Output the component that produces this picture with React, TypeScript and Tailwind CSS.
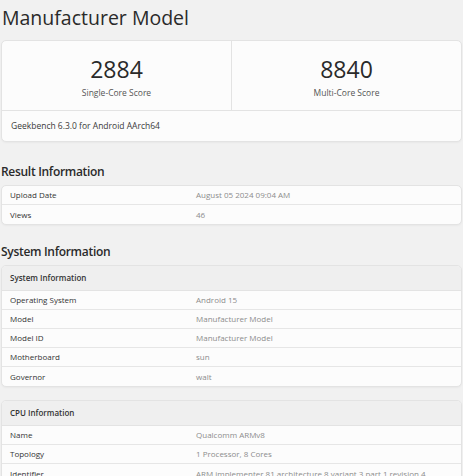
import React from "react";

function Row({ label, value, last }: { label: string; value: string; last?: boolean }) {
  return (
    <div className={`flex h-[19px] items-center ${last ? "" : "border-b border-[#e6e6e6]"}`}>
      <div className="w-[194px] shrink-0 pl-[8px] text-[8px] font-medium text-[#333]">{label}</div>
      <div className="whitespace-nowrap text-[8px] text-[#8c8c8c]">{value}</div>
    </div>
  );
}

function Card({ children, className = "" }: { children: React.ReactNode; className?: string }) {
  return (
    <div className={`mx-[1px] overflow-hidden rounded-[5px] border border-[#e3e3e3] bg-[#fcfcfc] shadow-[0_1px_2px_rgba(0,0,0,0.04)] ${className}`}>
      {children}
    </div>
  );
}

export default function App() {
  return (
    <div
      className="h-[476px] w-[463px] overflow-hidden bg-[#f1f1f1]"
      style={{ fontFamily: '"Open Sans", "Noto Sans", sans-serif' }}
    >
      <div className="flex h-[34px] items-center pl-[2px] pt-[2px] text-[19.5px] font-normal text-[#2a2a2a]">
        Manufacturer Model
      </div>
      <Card className="mt-[6px]">
        <div className="flex h-[70px] border-b border-[#e3e3e3]">
          <div className="flex flex-1 flex-col items-center justify-center border-r border-[#e3e3e3]">
            <div className="mt-[7px] text-[23px] leading-none text-[#2a2a2a]">2884</div>
            <div className="mt-[6px] text-[8.5px] text-[#555]">Single-Core Score</div>
          </div>
          <div className="flex flex-1 flex-col items-center justify-center">
            <div className="mt-[7px] text-[23px] leading-none text-[#2a2a2a]">8840</div>
            <div className="mt-[6px] text-[8.5px] text-[#555]">Multi-Core Score</div>
          </div>
        </div>
        <div className="flex h-[30px] items-center pl-[9px] text-[8.5px] text-[#3a3a3a]">
          Geekbench 6.3.0 for Android AArch64
        </div>
      </Card>

      <div className="mt-[17px] flex h-[26px] items-center pl-[1px] text-[12px] font-semibold tracking-[-0.3px] text-[#2a2a2a]">
        Result Information
      </div>
      <Card>
        <Row label="Upload Date" value="August 05 2024 09:04 AM" />
        <Row label="Views" value="46" last />
      </Card>

      <div className="mt-[14px] flex h-[26px] items-center pl-[1px] text-[12px] font-semibold tracking-[-0.3px] text-[#2a2a2a]">
        System Information
      </div>
      <Card>
        <div className="flex h-[25px] items-center border-b border-[#e3e3e3] bg-[#efefef] pl-[8px] text-[8px] font-semibold text-[#333]">
          System Information
        </div>
        <Row label="Operating System" value="Android 15" />
        <Row label="Model" value="Manufacturer Model" />
        <Row label="Model ID" value="Manufacturer Model" />
        <Row label="Motherboard" value="sun" />
        <Row label="Governor" value="walt" last />
      </Card>

      <Card className="mt-[13px]">
        <div className="flex h-[25px] items-center border-b border-[#e3e3e3] bg-[#efefef] pl-[8px] text-[8px] font-semibold text-[#333]">
          CPU Information
        </div>
        <Row label="Name" value="Qualcomm ARMv8" />
        <Row label="Topology" value="1 Processor, 8 Cores" />
        <Row label="Identifier" value="ARM implementer 81 architecture 8 variant 3 part 1 revision 4" last />
      </Card>
    </div>
  );
}
